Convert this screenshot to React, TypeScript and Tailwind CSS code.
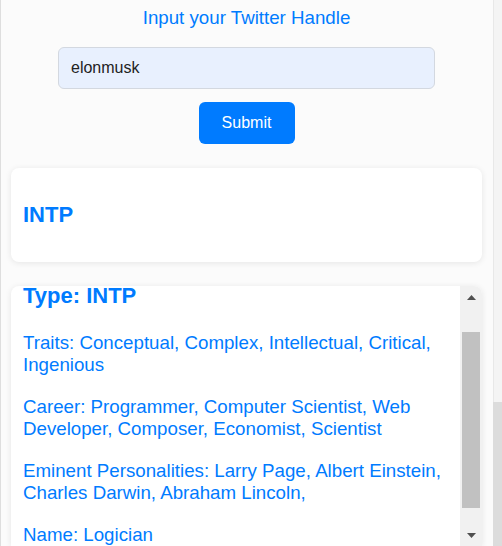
const details = [
  "Traits: Conceptual, Complex, Intellectual, Critical, Ingenious",
  "Career: Programmer, Computer Scientist, Web Developer, Composer, Economist, Scientist",
  "Eminent Personalities: Larry Page, Albert Einstein, Charles Darwin, Abraham Lincoln,",
  "Name: Logician",
];

const Arrow = ({ down }: { down?: boolean }) => (
  <svg width="9" height="5" viewBox="0 0 9 5" className={down ? "rotate-180" : ""}>
    <path d="M0 5 L4.5 0 L9 5 Z" fill="#505050" />
  </svg>
);

const App = () => {
  return (
    <div className="flex h-[546px] overflow-hidden bg-[#fbfbfb] font-['Liberation_Sans',Arial,sans-serif]">
      <div className="flex-1 flex flex-col border-l border-[#dedede] pl-[10px] pr-[11px]">
        <h2 className="mt-[7px] text-center text-[18.72px] leading-[22px] text-[#007bff]">
          Input your Twitter Handle
        </h2>

        <input
          type="text"
          defaultValue="elonmusk"
          className="mt-[18px] self-center w-[377px] h-[42px] rounded-[6px] border border-[#d3d8e0] bg-[#e8f0fe] px-3 text-[16px] text-[#222] outline-none"
        />

        <button className="mt-[13px] self-center w-[96px] h-[42px] rounded-[6px] bg-[#007bff] text-[16px] text-white">
          Submit
        </button>

        <div className="mt-[24px] h-[94px] shrink-0 flex items-center rounded-[8px] bg-white px-3 shadow-[0_1px_6px_rgba(0,0,0,0.09)]">
          <h3 className="text-[22px] leading-[26px] font-bold text-[#007bff]">INTP</h3>
        </div>

        <div className="mt-[24px] h-[260px] shrink-0 flex rounded-t-[8px] bg-white shadow-[0_1px_6px_rgba(0,0,0,0.09)] overflow-hidden">
          <div className="flex-1 overflow-hidden pl-3 pr-2">
            <h3 className="-mt-[3px] mb-[23px] text-[22px] leading-[26px] font-bold text-[#007bff]">
              Type: INTP
            </h3>
            {details.map((line) => (
              <p key={line} className="mb-[20px] text-[18.72px] leading-[22px] text-[#007bff]">
                {line}
              </p>
            ))}
          </div>

          <div className="w-[22px] flex flex-col bg-[#f1f1f1]">
            <div className="h-[22px] flex items-center justify-center">
              <Arrow />
            </div>
            <div className="mt-[24px] mx-[2px] h-[176px] bg-[#c1c1c1]" />
            <div className="flex-1 flex items-end justify-center pb-[8px]">
              <Arrow down />
            </div>
          </div>
        </div>
      </div>

      <div className="w-[9px] flex flex-col">
        <div className="h-[402px] border-l border-[#e8e8e8] bg-[#f4f4f4]" />
        <div className="flex-1 bg-[#dcdcdc]" />
      </div>
    </div>
  );
};

export default App;
